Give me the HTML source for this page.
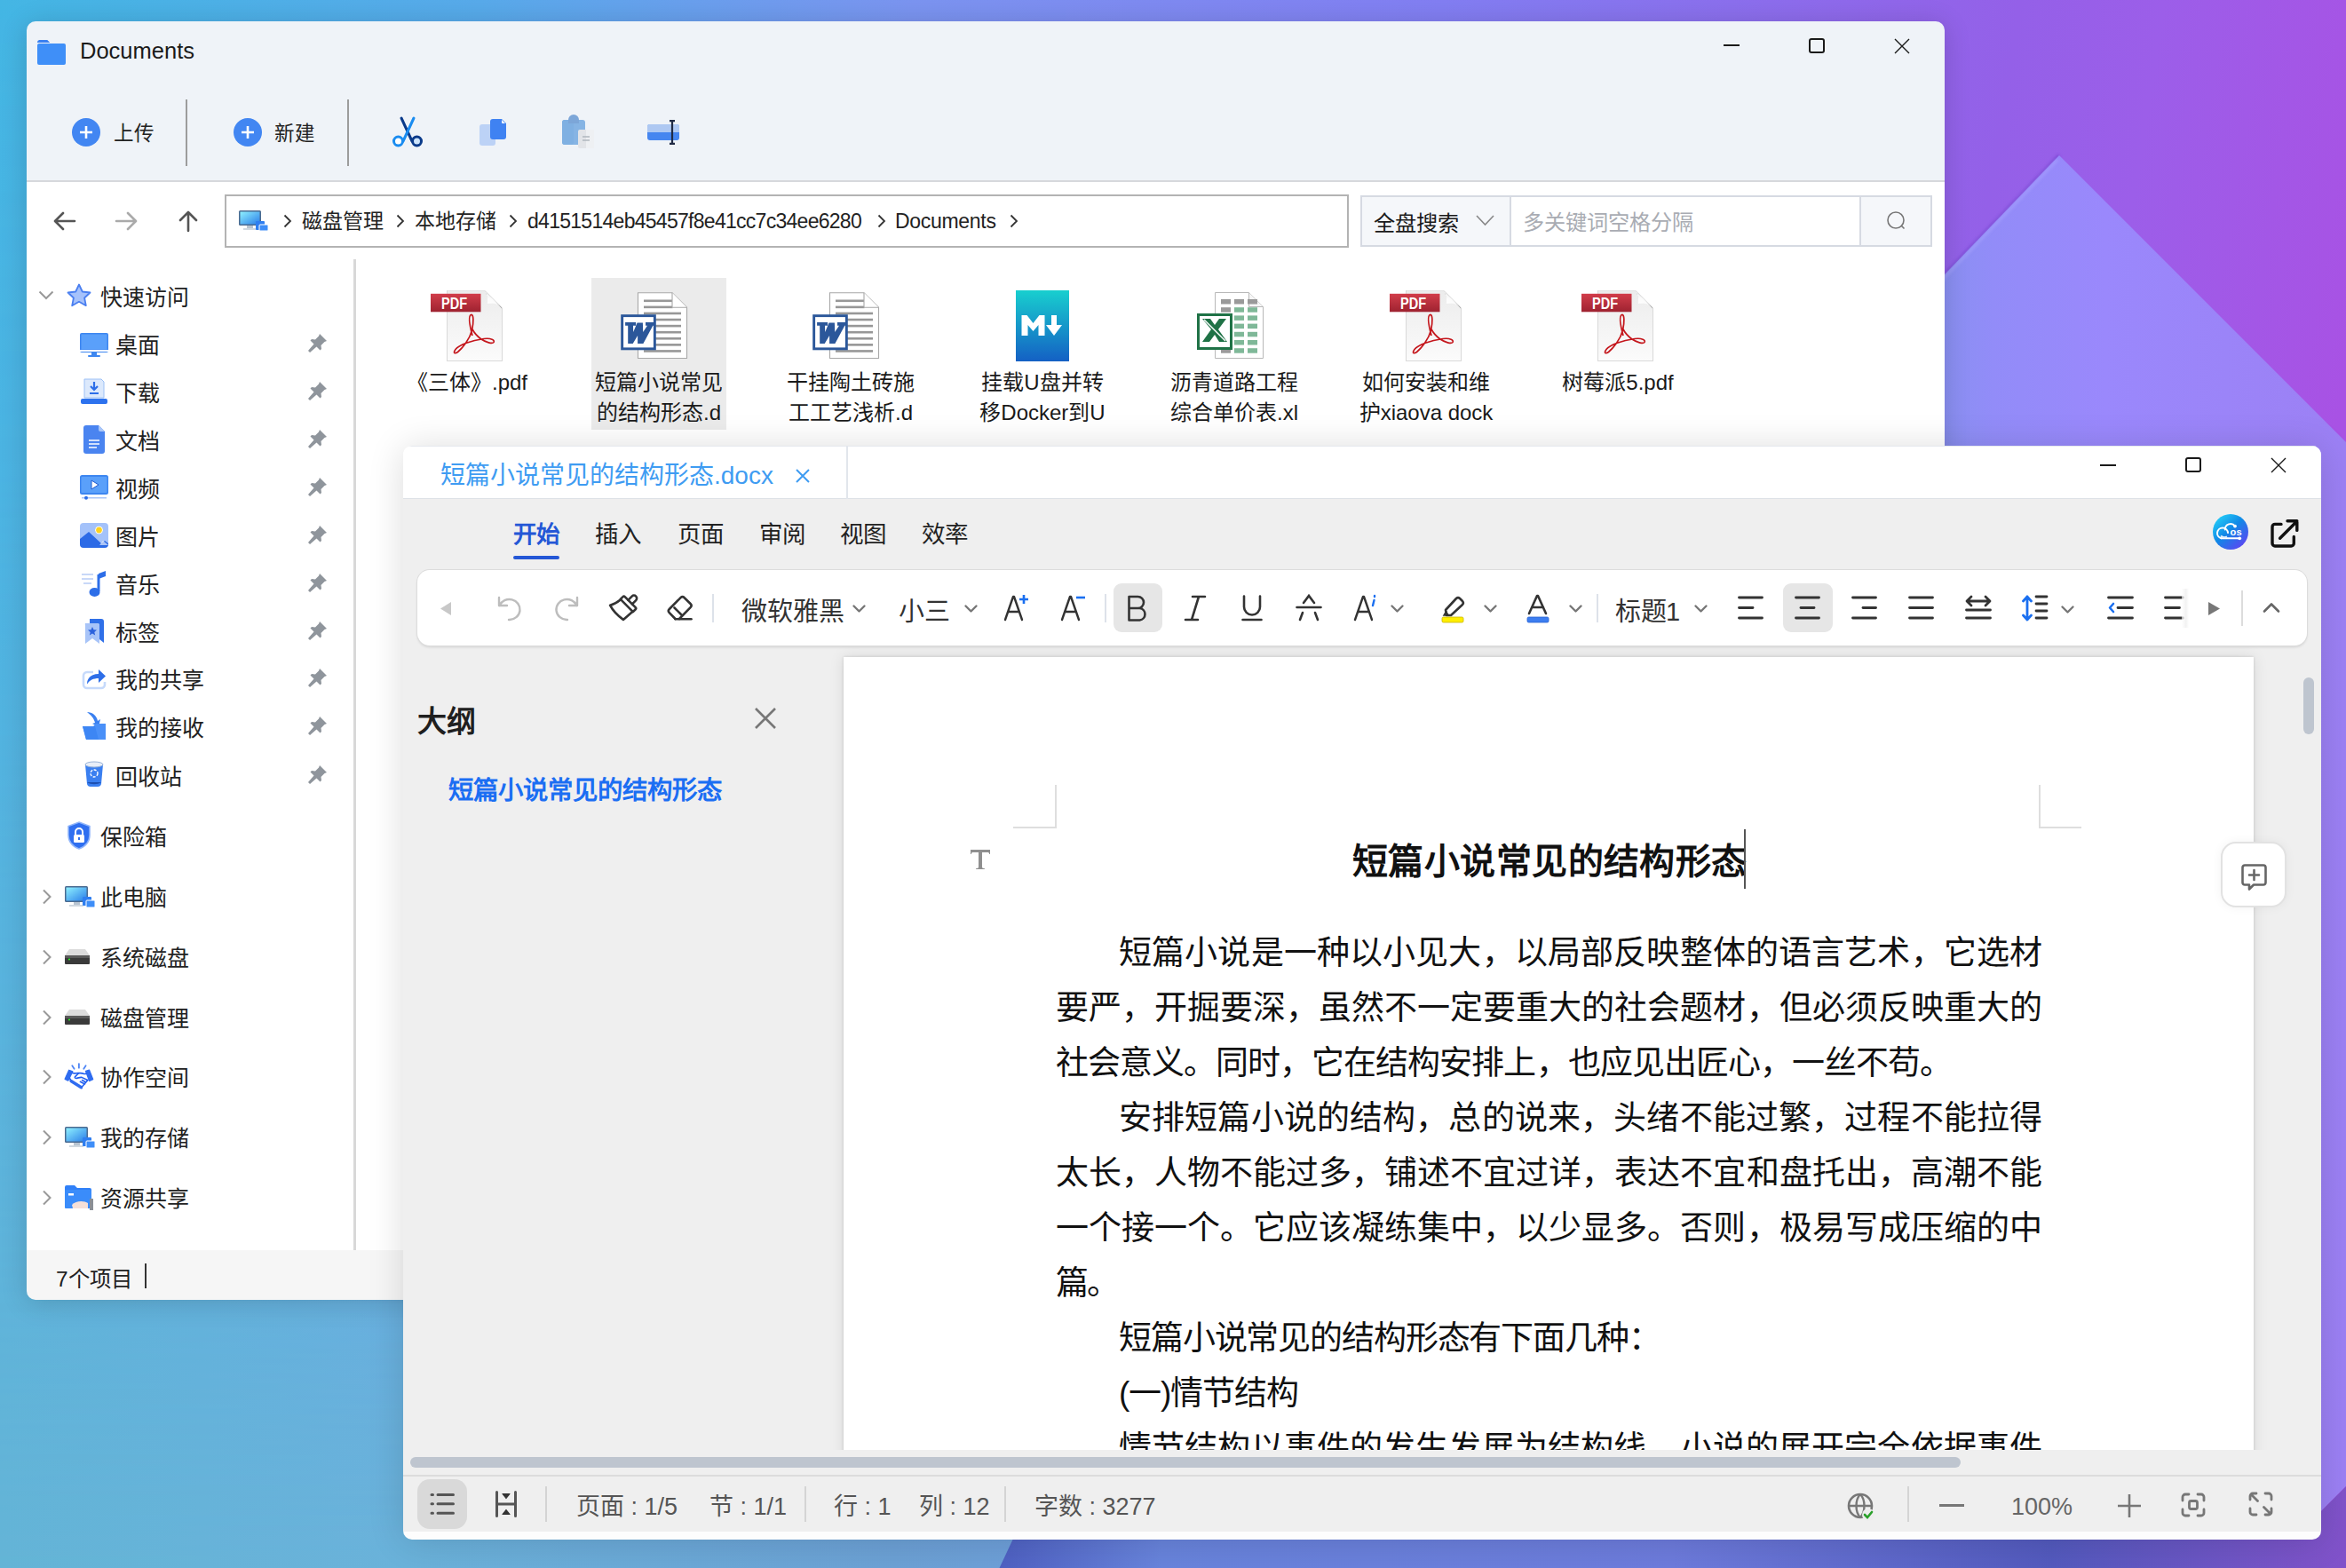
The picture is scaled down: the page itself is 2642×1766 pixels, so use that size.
<!DOCTYPE html>
<html lang="zh-CN"><head><meta charset="utf-8">
<style>
html,body{margin:0;padding:0}
body{width:2642px;height:1766px;position:relative;overflow:hidden;font-family:"Liberation Sans",sans-serif;color:#1a1a1a;background:#6a9ee6}
.a{position:absolute}
.t{position:absolute;white-space:nowrap;line-height:1}
svg{position:absolute;overflow:visible}
#exp{position:absolute;left:0;top:0;width:2642px;height:1766px;clip-path:inset(24px 452px 302px 30px round 10px)}
#edt{position:absolute;left:0;top:0;width:2642px;height:1766px;clip-path:inset(502px 28px 32px 454px round 10px)}
.cj{font-size:25px;color:#222}
.pin{position:absolute;left:347px;width:22px;height:22px}
</style></head><body>
<!-- background -->
<svg class="a" style="left:0;top:0" width="2642" height="1766" viewBox="0 0 2642 1766">
<defs>
<linearGradient id="bgt" gradientUnits="userSpaceOnUse" x1="0" y1="0" x2="2642" y2="420">
<stop offset="0" stop-color="#44b6e4"/>
<stop offset="0.2" stop-color="#58aaea"/>
<stop offset="0.38" stop-color="#7b94f0"/>
<stop offset="0.6" stop-color="#827ef2"/>
<stop offset="0.84" stop-color="#9460e8"/>
<stop offset="0.9" stop-color="#9c5ee9"/>
<stop offset="1" stop-color="#a852e4"/>
</linearGradient>
<linearGradient id="bgb" gradientUnits="userSpaceOnUse" x1="0" y1="0" x2="1200" y2="0">
<stop offset="0" stop-color="#64b4d6"/>
<stop offset="0.38" stop-color="#6ab2da"/>
<stop offset="0.84" stop-color="#6ca1d5"/>
<stop offset="1" stop-color="#6e9fda"/>
</linearGradient>
<linearGradient id="vm" x1="0" y1="0" x2="0" y2="1">
<stop offset="0" stop-color="#fff" stop-opacity="0"/>
<stop offset="0.3" stop-color="#fff" stop-opacity="0.15"/>
<stop offset="1" stop-color="#fff" stop-opacity="1"/>
</linearGradient>
<mask id="m1"><rect width="2642" height="1766" fill="url(#vm)"/></mask>
<linearGradient id="tri" gradientUnits="userSpaceOnUse" x1="2190" y1="0" x2="2642" y2="0">
<stop offset="0" stop-color="#8a90f2"/>
<stop offset="0.12" stop-color="#928cf8"/>
<stop offset="0.4" stop-color="#9a88fc"/>
<stop offset="1" stop-color="#9c80f4"/>
</linearGradient>
<filter id="blur2"><feGaussianBlur stdDeviation="1.5"/></filter>
<linearGradient id="bot" gradientUnits="userSpaceOnUse" x1="1125" y1="0" x2="2642" y2="0">
<stop offset="0" stop-color="#4e60c2"/>
<stop offset="0.12" stop-color="#6884dc"/>
<stop offset="0.5" stop-color="#6d7bdc"/>
<stop offset="0.78" stop-color="#535abe"/>
<stop offset="1" stop-color="#8152ca"/>
</linearGradient>
</defs>
<rect width="2642" height="1766" fill="url(#bgt)"/>
<rect width="1200" height="1766" fill="url(#bgb)" mask="url(#m1)"/>
<path d="M2319 175L1700 819" stroke="#6a3ac8" stroke-opacity="0.5" stroke-width="4" filter="url(#blur2)"/><polygon points="2319,175 2642,498 2642,1674 2600,1716 1700,1716 1700,819" fill="url(#tri)"/><path d="M2317 180L1700 822" stroke="#b0a8ff" stroke-opacity="0.45" stroke-width="3" filter="url(#blur2)"/>
<polygon points="1125.5,1766 1141,1733 1300,1400 2600,1400 2600,1716 2642,1674 2642,1766" fill="url(#bot)"/>

</svg>

<!-- shadows -->
<div class="a" style="left:30px;top:24px;width:2160px;height:1440px;border-radius:10px;box-shadow:0 3px 30px rgba(0,0,0,0.16)"></div>

<!-- ============ EXPLORER ============ -->
<div id="exp">
<div class="a" style="left:30px;top:24px;width:2160px;height:180px;background:#eff3f8"></div>
<div class="a" style="left:30px;top:203px;width:2160px;height:2px;background:#d6d8dc"></div>
<div class="a" style="left:30px;top:205px;width:2160px;height:1203px;background:#fff"></div>
<div class="a" style="left:30px;top:1408px;width:2160px;height:56px;background:#f6f6f6"></div>

<!-- title -->
<svg style="left:42px;top:45px" width="33" height="28" viewBox="0 0 33 28"><path d="M2 0h9l3 3h-12z" fill="#3a7ff2"/><rect x="0" y="4" width="32" height="24" rx="2" fill="#3f8ff8"/><path d="M0 3a3 3 0 0 1 3-3h8l3 3z" fill="#3a80f0"/></svg>
<div class="t" style="left:90px;top:45px;font-size:25.5px;color:#1b1b1b">Documents</div>
<div class="a" style="left:1941px;top:50px;width:18px;height:2.4px;background:#1a1a1a"></div>
<div class="a" style="left:2037px;top:43px;width:14px;height:13.2px;border:2.2px solid #1a1a1a;border-radius:3px"></div>
<svg style="left:2134px;top:44px" width="16" height="16" viewBox="0 0 16 16"><path d="M0 0L16 16M16 0L0 16" stroke="#1a1a1a" stroke-width="1.4"/></svg>
<!-- toolbar -->
<svg style="left:81px;top:133px" width="32" height="32" viewBox="0 0 32 32"><circle cx="16" cy="16" r="16" fill="#4286f2"/><path d="M16 9v14M9 16h14" stroke="#fff" stroke-width="2.6"/></svg>
<div class="t" style="left:128px;top:140px;font-size:22.5px;color:#222">上传</div>
<div class="a" style="left:209px;top:112px;width:2px;height:75px;background:#9c9c9c"></div>
<svg style="left:263px;top:133px" width="32" height="32" viewBox="0 0 32 32"><circle cx="16" cy="16" r="16" fill="#4286f2"/><path d="M16 9v14M9 16h14" stroke="#fff" stroke-width="2.6"/></svg>
<div class="t" style="left:309px;top:140px;font-size:22.5px;color:#222">新建</div>
<div class="a" style="left:391px;top:112px;width:2px;height:75px;background:#9c9c9c"></div>
<!-- scissors -->
<svg style="left:442px;top:132px" width="34" height="34" viewBox="0 0 34 34"><path d="M10 1L22 27" stroke="#0a3a8a" stroke-width="3" stroke-linecap="round"/><path d="M24 1L12 27" stroke="#1a8cf0" stroke-width="3" stroke-linecap="round"/><circle cx="6.5" cy="27" r="5" fill="#fff" stroke="#1a8cf0" stroke-width="3"/><circle cx="27.5" cy="27" r="5" fill="#cde4fb" stroke="#0a3a8a" stroke-width="3"/></svg>
<!-- copy -->
<svg style="left:540px;top:134px" width="30" height="30" viewBox="0 0 30 30"><rect x="0" y="6" width="18" height="24" rx="3" fill="#bcd2f6"/><path d="M15 0h10l5 5v15a3 3 0 0 1-3 3h-12a3 3 0 0 1-3-3v-17a3 3 0 0 1 3-3z" fill="#3f82f2"/><path d="M25 1l4 4h-3a1 1 0 0 1-1-1z" fill="#fff"/></svg>
<!-- paste -->
<svg style="left:633px;top:131px" width="36" height="36" viewBox="0 0 36 36"><rect x="0" y="4" width="26" height="28" rx="3" fill="#86b4e4"/><rect x="0" y="4" width="13" height="28" rx="3" fill="#7fb0e2"/><path d="M7 4a6 6 0 0 1 12 0v4h-12z" fill="#7ca6d8"/><rect x="18" y="15" width="18" height="21" rx="2" fill="#e2e4e8"/><rect x="27" y="15" width="9" height="21" fill="#eef0f3"/><path d="M23 23h8M23 27h8" stroke="#b0b6be" stroke-width="1.6"/></svg>
<!-- rename -->
<svg style="left:729px;top:135px" width="36" height="28" viewBox="0 0 36 28"><rect x="0" y="5" width="36" height="18" rx="3" fill="#4686f0"/><path d="M0 8a3 3 0 0 1 3-3h30a3 3 0 0 1 3 3v1.5h-36z" fill="#aecaf2"/><rect x="0" y="5" width="36" height="9" rx="3" fill="#aec8f2"/><rect x="0" y="11" width="36" height="3" fill="#aec8f2"/><path d="M28 1v26M25 1.2h6M25 26.8h6" stroke="#1f2a44" stroke-width="2.2"/></svg>
<div class="a" style="left:253px;top:219px;width:1262px;height:56px;border:2px solid #b3b3b3;background:#fff"></div>
<svg style="left:319px;top:241px" width="10" height="16" viewBox="0 0 10 16"><path d="M1.5 1.5l6.5 6.5-6.5 6.5" fill="none" stroke="#333" stroke-width="1.8"/></svg>
<div class="t" style="left:340px;top:238px;font-size:23px;color:#222">磁盘管理</div>
<svg style="left:446px;top:241px" width="10" height="16" viewBox="0 0 10 16"><path d="M1.5 1.5l6.5 6.5-6.5 6.5" fill="none" stroke="#333" stroke-width="1.8"/></svg>
<div class="t" style="left:467px;top:238px;font-size:23px;color:#222">本地存储</div>
<svg style="left:573px;top:241px" width="10" height="16" viewBox="0 0 10 16"><path d="M1.5 1.5l6.5 6.5-6.5 6.5" fill="none" stroke="#333" stroke-width="1.8"/></svg>
<div class="t" style="left:594px;top:238px;font-size:23px;letter-spacing:-0.72px;color:#222">d4151514eb45457f8e41cc7c34ee6280</div>
<svg style="left:988px;top:241px" width="10" height="16" viewBox="0 0 10 16"><path d="M1.5 1.5l6.5 6.5-6.5 6.5" fill="none" stroke="#333" stroke-width="1.8"/></svg>
<div class="t" style="left:1008px;top:238px;font-size:23px;letter-spacing:-0.3px;color:#222">Documents</div>
<svg style="left:1137px;top:241px" width="10" height="16" viewBox="0 0 10 16"><path d="M1.5 1.5l6.5 6.5-6.5 6.5" fill="none" stroke="#333" stroke-width="1.8"/></svg>
<div class="a" style="left:1532px;top:220px;width:640px;height:54px;border:2px solid #d6dae2;background:#fff"></div>
<div class="a" style="left:1534px;top:222px;width:166px;height:54px;background:#f5f7fa"></div>
<div class="a" style="left:1700px;top:222px;width:2px;height:54px;background:#d6dae2"></div>
<div class="a" style="left:2094px;top:222px;width:2px;height:54px;background:#d6dae2"></div>
<div class="a" style="left:2096px;top:222px;width:78px;height:54px;background:#f5f7fa"></div>
<div class="t" style="left:1547px;top:239.5px;font-size:24.2px;color:#1a1a1a">全盘搜索</div>
<svg style="left:1662px;top:242px" width="21" height="12" viewBox="0 0 21 12"><path d="M1 1l9.5 10L20 1" fill="none" stroke="#888" stroke-width="1.6"/></svg>
<div class="t" style="left:1715px;top:239px;font-size:24.2px;color:#a9acb3">多关键词空格分隔</div>
<svg style="left:2124px;top:237px" width="24" height="24" viewBox="0 0 24 24"><circle cx="11" cy="11" r="9" fill="none" stroke="#777" stroke-width="1.6"/><path d="M17 17l3.5 3.5" stroke="#777" stroke-width="1.6"/></svg>
<div class="a" style="left:398px;top:292px;width:3px;height:1116px;background:#d8d8d8"></div>
<!-- sidebar -->
<svg style="left:43px;top:327px" width="18" height="11" viewBox="0 0 18 11"><path d="M1.5 1.5L9 9l7.5-7.5" fill="none" stroke="#999" stroke-width="2"/></svg>
<svg style="left:75px;top:319px" width="28" height="27" viewBox="0 0 28 27"><path d="M14 1.5l3.8 8 8.7 1-6.4 6 1.7 8.7L14 20.8l-7.8 4.4 1.7-8.7-6.4-6 8.7-1z" fill="#a6c2fb" stroke="#4a7ff0" stroke-width="1.8" stroke-linejoin="round"/></svg>
<div class="t" style="left:113px;top:323.0px;font-size:25px;color:#222;">快速访问</div>
<svg style="left:90px;top:375px" width="32" height="27" viewBox="0 0 32 27"><rect x="0" y="0" width="32" height="22" rx="2" fill="#3d86f0"/><rect x="1.5" y="1.5" width="29" height="17" fill="#5aa0fa"/><rect x="0" y="19" width="32" height="2" fill="#fff"/><rect x="13" y="22" width="6" height="3" fill="#3d86f0"/><rect x="9" y="25" width="14" height="2" rx="1" fill="#3d86f0"/></svg>
<div class="t" style="left:130px;top:376.7px;font-size:25px;color:#222;">桌面</div>
<svg style="left:347px;top:374.7px" width="22" height="22" viewBox="0 0 22 22"><path d="M13 1l8 8-2.5 1-4 4 .5 4-1.5 1.5-4-4L2 22 0 20l6.5-7.5-4-4L4 7l4 .5 4-4z" fill="#8f959c"/></svg>
<svg style="left:91px;top:425px" width="30" height="31" viewBox="0 0 30 31"><path d="M4 2h19l3 3v18H4z" fill="#dce9fc" stroke="#9cc0f6" stroke-width="1"/><path d="M15 5v9M11 10l4 4 4-4" fill="none" stroke="#2d6ee8" stroke-width="2.2"/><rect x="10" y="17" width="10" height="2" fill="#2d6ee8"/><rect x="0" y="24" width="30" height="6" rx="2" fill="#2d72ee"/></svg>
<div class="t" style="left:130px;top:430.8px;font-size:25px;color:#222;">下载</div>
<svg style="left:347px;top:428.8px" width="22" height="22" viewBox="0 0 22 22"><path d="M13 1l8 8-2.5 1-4 4 .5 4-1.5 1.5-4-4L2 22 0 20l6.5-7.5-4-4L4 7l4 .5 4-4z" fill="#8f959c"/></svg>
<svg style="left:94px;top:479px" width="24" height="32" viewBox="0 0 24 32"><path d="M3 0h14l7 7v22a3 3 0 0 1-3 3H3a3 3 0 0 1-3-3V3a3 3 0 0 1 3-3z" fill="#4a84f0"/><path d="M17 0l7 7h-5a2 2 0 0 1-2-2z" fill="#a9c6f8"/><path d="M6 17h12M6 21h12M6 25h9" stroke="#fff" stroke-width="1.6"/></svg>
<div class="t" style="left:130px;top:485.3px;font-size:25px;color:#222;">文档</div>
<svg style="left:347px;top:483.3px" width="22" height="22" viewBox="0 0 22 22"><path d="M13 1l8 8-2.5 1-4 4 .5 4-1.5 1.5-4-4L2 22 0 20l6.5-7.5-4-4L4 7l4 .5 4-4z" fill="#8f959c"/></svg>
<svg style="left:90px;top:535px" width="32" height="27" viewBox="0 0 32 27"><rect x="0" y="0" width="32" height="22" rx="2.5" fill="#3d86f0"/><rect x="1.5" y="2" width="29" height="18" rx="1" fill="#5aa0fa"/><path d="M13 6l8 5-8 5z" fill="#fff" stroke="#1d5ad0" stroke-width="1"/><rect x="2" y="25" width="28" height="1.5" fill="#a9c6f8"/><circle cx="7" cy="25.8" r="2" fill="#2d6ee8"/></svg>
<div class="t" style="left:130px;top:538.6px;font-size:25px;color:#222;">视频</div>
<svg style="left:347px;top:536.6px" width="22" height="22" viewBox="0 0 22 22"><path d="M13 1l8 8-2.5 1-4 4 .5 4-1.5 1.5-4-4L2 22 0 20l6.5-7.5-4-4L4 7l4 .5 4-4z" fill="#8f959c"/></svg>
<svg style="left:90px;top:589px" width="32" height="27" viewBox="0 0 32 27"><rect x="0" y="0" width="32" height="27" rx="4" fill="#a4c2fa"/><circle cx="21.5" cy="8" r="4" fill="#ffd21f" stroke="#fff" stroke-width="1"/><path d="M0 18l10-8 14 13 4-3 4 3v1a4 4 0 0 1-4 4H4a4 4 0 0 1-4-4z" fill="#2c6ae6"/><path d="M22 25l4-5 6 5z" fill="#fff" opacity=".6"/></svg>
<div class="t" style="left:130px;top:593.0px;font-size:25px;color:#222;">图片</div>
<svg style="left:347px;top:591.0px" width="22" height="22" viewBox="0 0 22 22"><path d="M13 1l8 8-2.5 1-4 4 .5 4-1.5 1.5-4-4L2 22 0 20l6.5-7.5-4-4L4 7l4 .5 4-4z" fill="#8f959c"/></svg>
<svg style="left:92px;top:643px" width="28" height="30" viewBox="0 0 28 30"><path d="M0 4h13M0 9h13M2 14h9" stroke="#c8d8f8" stroke-width="2.2"/><path d="M19 4v19" stroke="#2d6ee8" stroke-width="3"/><path d="M19 3l8-3v6l-8 3z" fill="#2d6ee8"/><ellipse cx="14.5" cy="24" rx="6" ry="5" fill="#2d6ee8"/></svg>
<div class="t" style="left:130px;top:647.0px;font-size:25px;color:#222;">音乐</div>
<svg style="left:347px;top:645.0px" width="22" height="22" viewBox="0 0 22 22"><path d="M13 1l8 8-2.5 1-4 4 .5 4-1.5 1.5-4-4L2 22 0 20l6.5-7.5-4-4L4 7l4 .5 4-4z" fill="#8f959c"/></svg>
<svg style="left:93px;top:695px" width="25" height="31" viewBox="0 0 25 31"><path d="M8 2h13a3 3 0 0 1 3 3v24l-5-4V10a3 3 0 0 0-3-3H8z" fill="#3070e8"/><path d="M3 7h14a2 2 0 0 1 2 2v21l-8-6-8 6V9a2 2 0 0 1 0-2z" fill="#a8c4f8"/><path d="M11 11l1.5 3.3 3.5.3-2.7 2.3.9 3.5-3.2-1.9-3.2 1.9.9-3.5-2.7-2.3 3.5-.3z" fill="#2c62dc"/></svg>
<div class="t" style="left:130px;top:700.5px;font-size:25px;color:#222;">标签</div>
<svg style="left:347px;top:698.5px" width="22" height="22" viewBox="0 0 22 22"><path d="M13 1l8 8-2.5 1-4 4 .5 4-1.5 1.5-4-4L2 22 0 20l6.5-7.5-4-4L4 7l4 .5 4-4z" fill="#8f959c"/></svg>
<svg style="left:93px;top:751px" width="26" height="25" viewBox="0 0 26 25"><path d="M12 6H5a4 4 0 0 0-4 4v10a4 4 0 0 0 4 4h16a4 4 0 0 0 4-4v-3" fill="none" stroke="#c6dafb" stroke-width="2.6"/><path d="M5 19c0-7 6-11 13-11V3l8 7.5-8 7.5v-5c-6 0-10 2-13 6.5z" fill="#2d6ee8"/></svg>
<div class="t" style="left:130px;top:753.8px;font-size:25px;color:#222;">我的共享</div>
<svg style="left:347px;top:751.8px" width="22" height="22" viewBox="0 0 22 22"><path d="M13 1l8 8-2.5 1-4 4 .5 4-1.5 1.5-4-4L2 22 0 20l6.5-7.5-4-4L4 7l4 .5 4-4z" fill="#8f959c"/></svg>
<svg style="left:93px;top:801px" width="27" height="33" viewBox="0 0 27 33"><path d="M5 1c6 0 11 4 12 10l3-2-2 9-7-4 3-1c-1-5-5-9-9-12z" fill="#3a80f0"/><path d="M0 17h12l3-3h11v18H4z" fill="#4a90f8"/><path d="M0 17h14l4 15H4z" fill="#3d86f4"/></svg>
<div class="t" style="left:130px;top:808.4px;font-size:25px;color:#222;">我的接收</div>
<svg style="left:347px;top:806.4px" width="22" height="22" viewBox="0 0 22 22"><path d="M13 1l8 8-2.5 1-4 4 .5 4-1.5 1.5-4-4L2 22 0 20l6.5-7.5-4-4L4 7l4 .5 4-4z" fill="#8f959c"/></svg>
<svg style="left:95px;top:857px" width="22" height="30" viewBox="0 0 22 30"><path d="M1 4h20l-2 22a4 4 0 0 1-4 3H7a4 4 0 0 1-4-3z" fill="#3a7ff0"/><ellipse cx="11" cy="4" rx="10" ry="3" fill="#e8eef8" stroke="#9ab4d8" stroke-width="1"/><path d="M3 24c4 3 12 3 16 0" fill="#1d4fb0"/><circle cx="11" cy="14" r="4" fill="none" stroke="#fff" stroke-width="1.4" stroke-dasharray="3 1.5"/></svg>
<div class="t" style="left:130px;top:862.9px;font-size:25px;color:#222;">回收站</div>
<svg style="left:347px;top:860.9px" width="22" height="22" viewBox="0 0 22 22"><path d="M13 1l8 8-2.5 1-4 4 .5 4-1.5 1.5-4-4L2 22 0 20l6.5-7.5-4-4L4 7l4 .5 4-4z" fill="#8f959c"/></svg>
<svg style="left:75px;top:925px" width="28" height="32" viewBox="0 0 28 32"><path d="M14 1l12 4.5v10c0 8-5.5 13-12 15.5C7.5 28.5 2 23.5 2 15.5v-10z" fill="#2f6ff0" stroke="#8fb4fa" stroke-width="1.5"/><path d="M10 15v-3a4 4 0 0 1 8 0v3" fill="none" stroke="#fff" stroke-width="2"/><rect x="8" y="15" width="12" height="9" rx="1.5" fill="#fff"/><rect x="13" y="18" width="2" height="3" fill="#2f6ff0"/></svg>
<div class="t" style="left:113px;top:930.8px;font-size:25px;color:#222;">保险箱</div>
<svg style="left:47px;top:1001px" width="12" height="18" viewBox="0 0 12 18"><path d="M2 1.5l7.5 7.5L2 16.5" fill="none" stroke="#999" stroke-width="2"/></svg>
<svg style="left:73px;top:998px" width="34" height="24" viewBox="0 0 34 24"><defs><linearGradient id="scr2" x1="0" y1="0" x2="1" y2="1"><stop offset="0" stop-color="#8ef0ff"/><stop offset="1" stop-color="#2a7ee8"/></linearGradient></defs><rect x="0" y="0" width="26" height="18" rx="1.5" fill="#4a6a90"/><rect x="1.5" y="1.5" width="23" height="15" fill="url(#scr2)"/><rect x="10" y="18" width="7" height="3" fill="#b8c4d0"/><rect x="5" y="21" width="16" height="2" fill="#d0d8e0"/><rect x="20" y="12" width="10" height="10" rx="1" fill="#2e7ef0"/><rect x="24" y="16" width="10" height="8" rx="1" fill="#3e8ef8" stroke="#fff" stroke-width="1"/></svg>
<div class="t" style="left:113px;top:998.6px;font-size:25px;color:#222;">此电脑</div>
<svg style="left:47px;top:1069px" width="12" height="18" viewBox="0 0 12 18"><path d="M2 1.5l7.5 7.5L2 16.5" fill="none" stroke="#999" stroke-width="2"/></svg>
<svg style="left:73px;top:1069px" width="28" height="17" viewBox="0 0 28 17"><path d="M5 0h18l5 7H0z" fill="#dcdcdc"/><rect x="0" y="7" width="28" height="10" rx="1" fill="#3a3a3a"/><rect x="0" y="7" width="28" height="3" fill="#5a5a5a"/><circle cx="5" cy="11.5" r="1" fill="#2f2"/></svg>
<div class="t" style="left:113px;top:1066.6px;font-size:25px;color:#222;">系统磁盘</div>
<svg style="left:47px;top:1137px" width="12" height="18" viewBox="0 0 12 18"><path d="M2 1.5l7.5 7.5L2 16.5" fill="none" stroke="#999" stroke-width="2"/></svg>
<svg style="left:73px;top:1137px" width="28" height="17" viewBox="0 0 28 17"><path d="M5 0h18l5 7H0z" fill="#dcdcdc"/><rect x="0" y="7" width="28" height="10" rx="1" fill="#3a3a3a"/><rect x="0" y="7" width="28" height="3" fill="#5a5a5a"/><circle cx="5" cy="11.5" r="1" fill="#2f2"/></svg>
<div class="t" style="left:113px;top:1134.6px;font-size:25px;color:#222;">磁盘管理</div>
<svg style="left:47px;top:1204px" width="12" height="18" viewBox="0 0 12 18"><path d="M2 1.5l7.5 7.5L2 16.5" fill="none" stroke="#999" stroke-width="2"/></svg>
<svg style="left:68px;top:1192px" width="44" height="40" viewBox="0 0 44 40"><path d="M13.3 8.2L15.6 11.7M20.9 6.1V10.7M28.6 8.2L26.3 11.7" stroke="#4f86f6" stroke-width="1.8" stroke-linecap="round"/><path d="M9.7 13.3L13.8 14.8L8.8 25L5.2 23.3Z" fill="#2f6cf0" stroke="#2f6cf0" stroke-width="1.4" stroke-linejoin="round"/><path d="M28.6 14.5L32.5 13.2L36.6 23.5L32.7 25.4Z" fill="#2f6cf0" stroke="#2f6cf0" stroke-width="1.4" stroke-linejoin="round"/><g fill="none" stroke="#1f5ef0" stroke-width="1.6" stroke-linecap="round" stroke-linejoin="round"><path d="M13.8 16.5C16 17.5 18 16.5 20 16.6C22 16.8 24 16.2 26 17.2C27 17.8 28 17.6 29 17.3"/><path d="M20.5 16.8L16.4 20.9C16 22 17 22.6 18.5 22.4C20.5 22 22 21 24 21.4L30.6 24.5"/><path d="M24.5 24.5L28.8 27M22.4 26.3L27.6 29M30.9 24.5L23.5 33M10.6 22.8L12 25"/></g><path d="M12 25.5L23.5 32.8" stroke="#2f6cf0" stroke-width="3.4" stroke-linecap="round"/></svg>
<div class="t" style="left:113px;top:1202.3px;font-size:25px;color:#222;">协作空间</div>
<svg style="left:47px;top:1272px" width="12" height="18" viewBox="0 0 12 18"><path d="M2 1.5l7.5 7.5L2 16.5" fill="none" stroke="#999" stroke-width="2"/></svg>
<svg style="left:73px;top:1269px" width="34" height="24" viewBox="0 0 34 24"><defs><linearGradient id="scr2" x1="0" y1="0" x2="1" y2="1"><stop offset="0" stop-color="#8ef0ff"/><stop offset="1" stop-color="#2a7ee8"/></linearGradient></defs><rect x="0" y="0" width="26" height="18" rx="1.5" fill="#4a6a90"/><rect x="1.5" y="1.5" width="23" height="15" fill="url(#scr2)"/><rect x="10" y="18" width="7" height="3" fill="#b8c4d0"/><rect x="5" y="21" width="16" height="2" fill="#d0d8e0"/><rect x="20" y="12" width="10" height="10" rx="1" fill="#2e7ef0"/><rect x="24" y="16" width="10" height="8" rx="1" fill="#3e8ef8" stroke="#fff" stroke-width="1"/></svg>
<div class="t" style="left:113px;top:1270.4px;font-size:25px;color:#222;">我的存储</div>
<svg style="left:47px;top:1340px" width="12" height="18" viewBox="0 0 12 18"><path d="M2 1.5l7.5 7.5L2 16.5" fill="none" stroke="#999" stroke-width="2"/></svg>
<svg style="left:73px;top:1335px" width="32" height="28" viewBox="0 0 32 28"><path d="M0 2a2 2 0 0 1 2-2h9l3 3h14a2 2 0 0 1 2 2v20H0z" fill="#3080f8"/><rect x="0" y="5" width="30" height="21" rx="1" fill="#3a8cfa"/><rect x="4" y="9" width="6" height="2.5" fill="#fff"/><path d="M8 22c4-5 14-5 18-2v6H9z" fill="#f6e0d8"/><rect x="28" y="15" width="4" height="13" fill="#8a8f96"/></svg>
<div class="t" style="left:113px;top:1338.4px;font-size:25px;color:#222;">资源共享</div>
<div class="t" style="left:63px;top:1428.5px;font-size:24.4px;color:#222;">7个项目</div>
<div class="a" style="left:163px;top:1423px;width:2px;height:28px;background:#333"></div>
<!-- files -->
<div class="a" style="left:666px;top:313px;width:152px;height:171px;background:#ebebeb"></div>
<svg style="left:485px;top:326px" width="82" height="84" viewBox="0 0 82 84"><defs><linearGradient id="pg526" x1="0" y1="0" x2="0" y2="1"><stop offset="0" stop-color="#ececec"/><stop offset="1" stop-color="#fbfbfb"/></linearGradient><linearGradient id="rb526" x1="0" y1="0" x2="0" y2="1"><stop offset="0" stop-color="#d23d4a"/><stop offset="1" stop-color="#9e2230"/></linearGradient><radialGradient id="cu526" cx="0.2" cy="0.9" r="0.9"><stop offset="0" stop-color="#fff"/><stop offset="0.55" stop-color="#d0d0d0"/><stop offset="0.8" stop-color="#7a7a7a"/><stop offset="1" stop-color="#bbb"/></radialGradient></defs>
<path d="M18 1h43l20 20v60H18z" fill="#d9d9d9"/><path d="M19 1.5h41.5l19.5 19.5v59H19z" fill="url(#pg526)"/><path d="M61 1.5c2 3 3 8 3 14 6-1 13 1 16 6v-1z" fill="url(#cu526)"/><path d="M61 1.5l19 19.5c-3-4-9-6-16-5 0-6-1-11-3-14.5z" fill="#fff" opacity=".9"/>
<rect x="0" y="4.8" width="56.5" height="20.5" fill="url(#rb526)"/><text x="12" y="22" font-family="Liberation Sans" font-weight="700" font-size="17.5" fill="#fff" textLength="29" lengthAdjust="spacingAndGlyphs">PDF</text>
<path d="M47 52C44 41 42 30 45.5 28.5C48.5 27.5 48.5 37 46.5 46C44 56 36 66 30.5 70.5C27 73 25 71.5 28 67.5C32 62 46 57.5 60 55.5C68 54.5 72.5 57 71 59.5C69.5 61.5 62 59.5 57 56C52 52.5 48.5 48 46.5 44" fill="none" stroke="#c4161c" stroke-width="1.7"/></svg>
<div class="t" style="left:426px;width:200px;text-align:center;top:419.3px;font-size:24px;color:#1a1a1a">《三体》.pdf</div>
<svg style="left:699px;top:329px" width="76" height="76" viewBox="0 0 76 76"><path d="M19.5 0.8H58L74.5 17.3V74.5H19.5Z" fill="#fff" stroke="#a8a8a8" stroke-width="1.1"/><rect x="26" y="8.50" width="32.5" height="2.6" fill="#979797"/><rect x="26" y="15.58" width="32.5" height="2.6" fill="#979797"/><rect x="26" y="22.66" width="42" height="2.6" fill="#979797"/><rect x="26" y="29.74" width="42" height="2.6" fill="#979797"/><rect x="26" y="36.82" width="42" height="2.6" fill="#979797"/><rect x="26" y="43.90" width="42" height="2.6" fill="#979797"/><rect x="26" y="50.98" width="42" height="2.6" fill="#979797"/><rect x="26" y="58.06" width="42" height="2.6" fill="#979797"/><rect x="26" y="65.14" width="42" height="2.6" fill="#979797"/><path d="M58 0.8V17.3H74.5" fill="#fff" stroke="#a8a8a8" stroke-width="1.1"/><rect x="1.65" y="26.65" width="36.7" height="37.2" fill="#fff" stroke="#2b579a" stroke-width="2.9"/><path d="M5.1 34.1H17.1V37.8H14L14.2 45L18.6 34.6H24.9L25.2 45L30 37.8H28V34.1H37.5V37.8H36.3L25.4 57.9H19.1V49L13.7 57.9H8.2V37.8H5.1Z" fill="#2b579a"/></svg>
<div class="t" style="left:642px;width:200px;text-align:center;top:419.3px;font-size:24px;color:#1a1a1a">短篇小说常见</div>
<div class="t" style="left:642px;width:200px;text-align:center;top:453.1px;font-size:24px;color:#1a1a1a">的结构形态.d</div>
<svg style="left:915px;top:329px" width="76" height="76" viewBox="0 0 76 76"><path d="M19.5 0.8H58L74.5 17.3V74.5H19.5Z" fill="#fff" stroke="#a8a8a8" stroke-width="1.1"/><rect x="26" y="8.50" width="32.5" height="2.6" fill="#979797"/><rect x="26" y="15.58" width="32.5" height="2.6" fill="#979797"/><rect x="26" y="22.66" width="42" height="2.6" fill="#979797"/><rect x="26" y="29.74" width="42" height="2.6" fill="#979797"/><rect x="26" y="36.82" width="42" height="2.6" fill="#979797"/><rect x="26" y="43.90" width="42" height="2.6" fill="#979797"/><rect x="26" y="50.98" width="42" height="2.6" fill="#979797"/><rect x="26" y="58.06" width="42" height="2.6" fill="#979797"/><rect x="26" y="65.14" width="42" height="2.6" fill="#979797"/><path d="M58 0.8V17.3H74.5" fill="#fff" stroke="#a8a8a8" stroke-width="1.1"/><rect x="1.65" y="26.65" width="36.7" height="37.2" fill="#fff" stroke="#2b579a" stroke-width="2.9"/><path d="M5.1 34.1H17.1V37.8H14L14.2 45L18.6 34.6H24.9L25.2 45L30 37.8H28V34.1H37.5V37.8H36.3L25.4 57.9H19.1V49L13.7 57.9H8.2V37.8H5.1Z" fill="#2b579a"/></svg>
<div class="t" style="left:858px;width:200px;text-align:center;top:419.3px;font-size:24px;color:#1a1a1a">干挂陶土砖施</div>
<div class="t" style="left:858px;width:200px;text-align:center;top:453.1px;font-size:24px;color:#1a1a1a">工工艺浅析.d</div>
<svg style="left:1144px;top:327px" width="61" height="81" viewBox="0 0 61 81"><defs><linearGradient id="mdg" x1="0" y1="0" x2="0" y2="1"><stop offset="0" stop-color="#18cfcf"/><stop offset="1" stop-color="#1460c4"/></linearGradient></defs><rect x="0" y="0" width="60" height="80" fill="url(#mdg)"/><path d="M6.5 51V28h6l7 9 7-9h6v23h-7V39l-6 7-6-7v12z" fill="#fff"/><path d="M40 28h6v11h6l-9 12-9-12h6z" fill="#fff"/></svg>
<div class="t" style="left:1074px;width:200px;text-align:center;top:419.3px;font-size:24px;color:#1a1a1a">挂载U盘并转</div>
<div class="t" style="left:1074px;width:200px;text-align:center;top:453.1px;font-size:24px;color:#1a1a1a">移Docker到U</div>
<svg style="left:1348px;top:329px" width="76" height="76" viewBox="0 0 76 76"><path d="M20.5 0.5h38l16 16v58h-54z" fill="#fff" stroke="#b8b8b8" stroke-width="1"/><path d="M58.5 0.5v16h16" fill="#f6f6f6" stroke="#b8b8b8" stroke-width="1"/><rect x="27" y="8.0" width="11" height="5.5" fill="#9a9a9a"/><rect x="42" y="8.0" width="11" height="5.5" fill="#9a9a9a"/><rect x="57" y="8.0" width="11" height="5.5" fill="#9a9a9a"/><rect x="27" y="17.2" width="11" height="5.5" fill="#9a9a9a"/><rect x="42" y="17.2" width="11" height="5.5" fill="#7fb898"/><rect x="57" y="17.2" width="11" height="5.5" fill="#7fb898"/><rect x="27" y="26.4" width="11" height="5.5" fill="#7fb898"/><rect x="42" y="26.4" width="11" height="5.5" fill="#7fb898"/><rect x="57" y="26.4" width="11" height="5.5" fill="#7fb898"/><rect x="27" y="35.6" width="11" height="5.5" fill="#7fb898"/><rect x="42" y="35.6" width="11" height="5.5" fill="#7fb898"/><rect x="57" y="35.6" width="11" height="5.5" fill="#7fb898"/><rect x="27" y="44.8" width="11" height="5.5" fill="#7fb898"/><rect x="42" y="44.8" width="11" height="5.5" fill="#7fb898"/><rect x="57" y="44.8" width="11" height="5.5" fill="#7fb898"/><rect x="27" y="54.0" width="11" height="5.5" fill="#7fb898"/><rect x="42" y="54.0" width="11" height="5.5" fill="#7fb898"/><rect x="57" y="54.0" width="11" height="5.5" fill="#7fb898"/><rect x="27" y="63.2" width="11" height="5.5" fill="#9a9a9a"/><rect x="42" y="63.2" width="11" height="5.5" fill="#7fb898"/><rect x="57" y="63.2" width="11" height="5.5" fill="#7fb898"/>
<rect x="1.5" y="25.5" width="37" height="38" fill="#fff" stroke="#1f7246" stroke-width="3"/><path d="M6 30h9l5 7 5-7h8l-9 12 10 14h-9l-5-8-6 8H6l10-14z" fill="#1f7246"/><path d="M8 31l24 24" stroke="#fff" stroke-width="1.5"/></svg>
<div class="t" style="left:1290px;width:200px;text-align:center;top:419.3px;font-size:24px;color:#1a1a1a">沥青道路工程</div>
<div class="t" style="left:1290px;width:200px;text-align:center;top:453.1px;font-size:24px;color:#1a1a1a">综合单价表.xl</div>
<svg style="left:1565px;top:326px" width="82" height="84" viewBox="0 0 82 84"><defs><linearGradient id="pg1606" x1="0" y1="0" x2="0" y2="1"><stop offset="0" stop-color="#ececec"/><stop offset="1" stop-color="#fbfbfb"/></linearGradient><linearGradient id="rb1606" x1="0" y1="0" x2="0" y2="1"><stop offset="0" stop-color="#d23d4a"/><stop offset="1" stop-color="#9e2230"/></linearGradient><radialGradient id="cu1606" cx="0.2" cy="0.9" r="0.9"><stop offset="0" stop-color="#fff"/><stop offset="0.55" stop-color="#d0d0d0"/><stop offset="0.8" stop-color="#7a7a7a"/><stop offset="1" stop-color="#bbb"/></radialGradient></defs>
<path d="M18 1h43l20 20v60H18z" fill="#d9d9d9"/><path d="M19 1.5h41.5l19.5 19.5v59H19z" fill="url(#pg1606)"/><path d="M61 1.5c2 3 3 8 3 14 6-1 13 1 16 6v-1z" fill="url(#cu1606)"/><path d="M61 1.5l19 19.5c-3-4-9-6-16-5 0-6-1-11-3-14.5z" fill="#fff" opacity=".9"/>
<rect x="0" y="4.8" width="56.5" height="20.5" fill="url(#rb1606)"/><text x="12" y="22" font-family="Liberation Sans" font-weight="700" font-size="17.5" fill="#fff" textLength="29" lengthAdjust="spacingAndGlyphs">PDF</text>
<path d="M47 52C44 41 42 30 45.5 28.5C48.5 27.5 48.5 37 46.5 46C44 56 36 66 30.5 70.5C27 73 25 71.5 28 67.5C32 62 46 57.5 60 55.5C68 54.5 72.5 57 71 59.5C69.5 61.5 62 59.5 57 56C52 52.5 48.5 48 46.5 44" fill="none" stroke="#c4161c" stroke-width="1.7"/></svg>
<div class="t" style="left:1506px;width:200px;text-align:center;top:419.3px;font-size:24px;color:#1a1a1a">如何安装和维</div>
<div class="t" style="left:1506px;width:200px;text-align:center;top:453.1px;font-size:24px;color:#1a1a1a">护xiaova dock</div>
<svg style="left:1781px;top:326px" width="82" height="84" viewBox="0 0 82 84"><defs><linearGradient id="pg1822" x1="0" y1="0" x2="0" y2="1"><stop offset="0" stop-color="#ececec"/><stop offset="1" stop-color="#fbfbfb"/></linearGradient><linearGradient id="rb1822" x1="0" y1="0" x2="0" y2="1"><stop offset="0" stop-color="#d23d4a"/><stop offset="1" stop-color="#9e2230"/></linearGradient><radialGradient id="cu1822" cx="0.2" cy="0.9" r="0.9"><stop offset="0" stop-color="#fff"/><stop offset="0.55" stop-color="#d0d0d0"/><stop offset="0.8" stop-color="#7a7a7a"/><stop offset="1" stop-color="#bbb"/></radialGradient></defs>
<path d="M18 1h43l20 20v60H18z" fill="#d9d9d9"/><path d="M19 1.5h41.5l19.5 19.5v59H19z" fill="url(#pg1822)"/><path d="M61 1.5c2 3 3 8 3 14 6-1 13 1 16 6v-1z" fill="url(#cu1822)"/><path d="M61 1.5l19 19.5c-3-4-9-6-16-5 0-6-1-11-3-14.5z" fill="#fff" opacity=".9"/>
<rect x="0" y="4.8" width="56.5" height="20.5" fill="url(#rb1822)"/><text x="12" y="22" font-family="Liberation Sans" font-weight="700" font-size="17.5" fill="#fff" textLength="29" lengthAdjust="spacingAndGlyphs">PDF</text>
<path d="M47 52C44 41 42 30 45.5 28.5C48.5 27.5 48.5 37 46.5 46C44 56 36 66 30.5 70.5C27 73 25 71.5 28 67.5C32 62 46 57.5 60 55.5C68 54.5 72.5 57 71 59.5C69.5 61.5 62 59.5 57 56C52 52.5 48.5 48 46.5 44" fill="none" stroke="#c4161c" stroke-width="1.7"/></svg>
<div class="t" style="left:1722px;width:200px;text-align:center;top:419.3px;font-size:24px;color:#1a1a1a">树莓派5.pdf</div>
<!-- nav -->
<svg style="left:60px;top:238px" width="25" height="22" viewBox="0 0 25 22"><path d="M24 11H3M11 2L2 11l9 9" fill="none" stroke="#555" stroke-width="2.6" stroke-linecap="round" stroke-linejoin="round"/></svg>
<svg style="left:130px;top:238px" width="25" height="22" viewBox="0 0 25 22"><path d="M1 11h21M14 2l9 9-9 9" fill="none" stroke="#aaa" stroke-width="2.6" stroke-linecap="round" stroke-linejoin="round"/></svg>
<svg style="left:201px;top:237px" width="22" height="24" viewBox="0 0 22 24"><path d="M11 23V2M2 11l9-9 9 9" fill="none" stroke="#555" stroke-width="2.6" stroke-linecap="round" stroke-linejoin="round"/></svg>
<!-- address -->
<svg style="left:269px;top:237px" width="33" height="23" viewBox="0 0 33 23"><defs><linearGradient id="scr" x1="0" y1="0" x2="1" y2="1"><stop offset="0" stop-color="#8ef0ff"/><stop offset="1" stop-color="#2a7ee8"/></linearGradient></defs><rect x="0" y="0" width="25" height="17" rx="1.5" fill="#4a6a90"/><rect x="1.5" y="1.5" width="22" height="14" fill="url(#scr)"/><rect x="9" y="17" width="7" height="3" fill="#b8c4d0"/><rect x="5" y="20" width="15" height="2" fill="#d0d8e0"/><rect x="19" y="12" width="10" height="10" rx="1" fill="#2e7ef0"/><rect x="23" y="16" width="10" height="7" rx="1" fill="#3e8ef8" stroke="#fff" stroke-width="1"/></svg>
</div>

<div class="a" style="left:454px;top:502px;width:2160px;height:1232px;border-radius:10px;box-shadow:0 2px 40px rgba(0,0,0,0.14)"></div>
<!-- ============ EDITOR ============ -->
<div id="edt">
<div class="a" style="left:454px;top:502px;width:2160px;height:60px;background:#fff"></div>
<div class="a" style="left:454px;top:561px;width:2160px;height:1px;background:#dde1e6"></div>
<div class="a" style="left:454px;top:562px;width:2160px;height:1100px;background:#efefef"></div>
<div class="a" style="left:454px;top:1661px;width:2160px;height:2px;background:#dcdcdc"></div>
<div class="a" style="left:454px;top:1663px;width:2160px;height:62px;background:#efefef"></div>
<div class="a" style="left:454px;top:1725px;width:2160px;height:9px;background:#fdfdfd"></div>
<div class="a" style="left:454px;top:502px;width:2160px;height:1px;background:#e6e9ee"></div>
<div class="a" style="left:953px;top:502px;width:2px;height:60px;background:#e2e6ec"></div>
<div class="t" style="left:496px;top:522px;font-size:28px;color:#3f9cf2;font-weight:500;">短篇小说常见的结构形态.docx</div>
<svg style="left:896px;top:528px" width="16" height="16" viewBox="0 0 16 16"><path d="M1 1l14 14M15 1L1 15" stroke="#3f9cf2" stroke-width="2"/></svg>
<div class="a" style="left:2365px;top:522.5px;width:18px;height:2.4px;background:#1a1a1a"></div>
<div class="a" style="left:2461px;top:515px;width:14px;height:13.3px;border:2.2px solid #1a1a1a;border-radius:3px"></div>
<svg style="left:2558px;top:516px" width="16" height="16" viewBox="0 0 16 16"><path d="M0 0L16 16M16 0L0 16" stroke="#1a1a1a" stroke-width="1.4"/></svg>
<div class="t" style="left:577.5px;top:589px;font-size:26.5px;color:#2457d6;font-weight:700;">开始</div>
<div class="a" style="left:578px;top:626px;width:52px;height:4px;border-radius:2px;background:#2457d6"></div>
<div class="t" style="left:669.5px;top:589px;font-size:26.5px;color:#222;font-weight:400;">插入</div>
<div class="t" style="left:762.5px;top:589px;font-size:26.5px;color:#222;font-weight:400;">页面</div>
<div class="t" style="left:854.5px;top:589px;font-size:26.5px;color:#222;font-weight:400;">审阅</div>
<div class="t" style="left:945.5px;top:589px;font-size:26.5px;color:#222;font-weight:400;">视图</div>
<div class="t" style="left:1037.5px;top:589px;font-size:26.5px;color:#222;font-weight:400;">效率</div>
<svg style="left:2492px;top:579px" width="40" height="40" viewBox="0 0 40 40"><defs><linearGradient id="cos" x1="0.15" y1="0.1" x2="0.85" y2="0.9"><stop offset="0" stop-color="#22c8f6"/><stop offset="0.45" stop-color="#1088e6"/><stop offset="1" stop-color="#5a48f2"/></linearGradient></defs><circle cx="20" cy="20" r="20" fill="url(#cos)"/><g fill="none" stroke="#fff" stroke-width="2" stroke-linecap="round"><path d="M9.5 27.3A6 6 0 1 1 17 21"/><path d="M13.8 17.5A6.2 6.2 0 0 1 25 13.6"/><path d="M9.5 27.3H30"/></g><circle cx="25" cy="13.6" r="1.9" fill="#fff"/><circle cx="30.2" cy="27.3" r="1.9" fill="#fff"/><path d="M9 24.5c2 2 5 2 7 1" stroke="#dff0ff" stroke-width="2" fill="none"/><text x="19.6" y="23.8" font-family="Liberation Sans" font-weight="700" font-size="10.5" fill="#fff" textLength="13" lengthAdjust="spacingAndGlyphs">os</text></svg>
<svg style="left:2557px;top:585px" width="33" height="33" viewBox="0 0 33 33"><path d="M12 5.4H5a3 3 0 0 0-3 3V27a3 3 0 0 0 3 3h18.3a3 3 0 0 0 3-3V19.5" fill="none" stroke="#111" stroke-width="3.4" stroke-linecap="round"/><path d="M10.6 21.3L29.8 2M19 1.8H29.8V12.4" fill="none" stroke="#111" stroke-width="3.4" stroke-linecap="round" stroke-linejoin="round"/></svg>
<div class="a" style="left:470px;top:642px;width:2128px;height:85px;background:#fff;border-radius:14px;box-shadow:0 0 0 1px #dcdcdc,0 2px 3px rgba(0,0,0,0.12)"></div>
<svg style="left:496px;top:678px" width="13" height="15" viewBox="0 0 13 15"><path d="M12 0v15L0 7.5z" fill="#c8c8c8"/></svg>
<svg style="left:559px;top:670px" width="30" height="30" viewBox="0 0 30 30"><path d="M3 3v9h9" fill="none" stroke="#bdbdbd" stroke-width="2.4" stroke-linecap="round" stroke-linejoin="round"/><path d="M3.5 12A12 11.5 0 1 1 15 28h-1" fill="none" stroke="#bdbdbd" stroke-width="2.4" stroke-linecap="round"/></svg>
<svg style="left:623px;top:670px" width="30" height="30" viewBox="0 0 30 30"><path d="M27 3v9h-9" fill="none" stroke="#bdbdbd" stroke-width="2.4" stroke-linecap="round" stroke-linejoin="round"/><path d="M26.5 12A12 11.5 0 1 0 15 28h1" fill="none" stroke="#bdbdbd" stroke-width="2.4" stroke-linecap="round"/></svg>
<svg style="left:680px;top:660px" width="110" height="50" viewBox="0 0 110 50"><g transform="translate(25.8 22) rotate(45)" fill="none" stroke="#333" stroke-width="2.6" stroke-linejoin="round" stroke-linecap="round"><path d="M-9.5 0C-10 5-11 9-13.5 13C-6 15.5 2 15 8.5 14L9.5 0"/><path d="M-10 0H10V-4a1.5 1.5 0 0 0-1.5-1.5H-8.5A1.5 1.5 0 0 0-10-4Z"/><path d="M-3.2 -5.5V-11.5a3.2 3.2 0 0 1 6.4 0V-5.5"/></g><g fill="none" stroke="#333" stroke-width="2.6" stroke-linejoin="round" stroke-linecap="round"><path d="M80.5 37L73.8 30.2a3 3 0 0 1 0-4.2L86.5 13.2a3 3 0 0 1 4.2 0L97.6 20a3 3 0 0 1 0 4.2L85 37"/><path d="M79.5 24.5L88 33"/><path d="M80.5 37.3H98.5"/></g></svg>

<div class="a" style="left:802px;top:669px;width:2px;height:32px;background:#dde2ea"></div>
<div class="t" style="left:835px;top:674.5px;font-size:29px;color:#333;font-weight:400;">微软雅黑</div>
<svg style="left:960px;top:681px" width="15" height="9" viewBox="0 0 15 9"><path d="M1.5 1.5l6 6 6-6" fill="none" stroke="#777" stroke-width="2.4" stroke-linecap="round" stroke-linejoin="round"/></svg>
<div class="t" style="left:1011.5px;top:674.5px;font-size:29px;color:#333;font-weight:400;">小三</div>
<svg style="left:1086px;top:681px" width="15" height="9" viewBox="0 0 15 9"><path d="M1.5 1.5l6 6 6-6" fill="none" stroke="#777" stroke-width="2.4" stroke-linecap="round" stroke-linejoin="round"/></svg>
<svg style="left:1130px;top:669px" width="30" height="30" viewBox="0 0 30 30"><path d="M2 29L11 3h1L21 29M6 20h11" fill="none" stroke="#333" stroke-width="2.4" stroke-linecap="round" stroke-linejoin="round"/><path d="M23 1v10M18 6h10" stroke="#1a6ff0" stroke-width="2.6"/></svg>
<svg style="left:1194px;top:669px" width="30" height="30" viewBox="0 0 30 30"><path d="M2 29L11 3h1L21 29M6 20h11" fill="none" stroke="#333" stroke-width="2.4" stroke-linecap="round" stroke-linejoin="round"/><path d="M18 4h10" stroke="#1a6ff0" stroke-width="2.6"/></svg>
<div class="a" style="left:1244px;top:669px;width:2px;height:32px;background:#dde2ea"></div>
<div class="a" style="left:1254px;top:657px;width:55px;height:55px;border-radius:9px;background:#e6e6e6"></div>
<svg style="left:1269px;top:670px" width="25" height="30" viewBox="0 0 25 30"><path d="M2.5 2h10a6.5 6.5 0 0 1 0 13h-10zM2.5 15h12a6.8 6.8 0 0 1 0 13.5h-12z" fill="none" stroke="#333" stroke-width="2.6" stroke-linejoin="round"/></svg>
<svg style="left:1333px;top:670px" width="26" height="30" viewBox="0 0 26 30"><path d="M10 2h14M2 28h14M17 2L9 28" fill="none" stroke="#333" stroke-width="2.6" stroke-linecap="round"/></svg>
<svg style="left:1398px;top:670px" width="24" height="30" viewBox="0 0 24 30"><path d="M3 1.5v12a9 9 0 0 0 18 0v-12M1.5 28h21" fill="none" stroke="#333" stroke-width="2.6" stroke-linecap="round"/></svg>
<svg style="left:1459px;top:669px" width="30" height="31" viewBox="0 0 30 31"><path d="M9 10L15 2l6 8M8 21l-3 8M22 21l3 8M1.5 15h27" fill="none" stroke="#333" stroke-width="2.6" stroke-linecap="round"/></svg>
<svg style="left:1524px;top:669px" width="26" height="30" viewBox="0 0 26 30"><path d="M2 29L11 3h1L21 29M6 20h11" fill="none" stroke="#333" stroke-width="2.4" stroke-linecap="round" stroke-linejoin="round"/><path d="M24 2v1M23.5 7l-1.5 6" stroke="#1a6ff0" stroke-width="2.4" stroke-linecap="round"/></svg>
<svg style="left:1566px;top:681px" width="15" height="9" viewBox="0 0 15 9"><path d="M1.5 1.5l6 6 6-6" fill="none" stroke="#777" stroke-width="2.4" stroke-linecap="round" stroke-linejoin="round"/></svg>
<svg style="left:1623px;top:670px" width="27" height="32" viewBox="0 0 27 32"><path d="M5 17l12-13a3 3 0 0 1 4 0l3 3a3 3 0 0 1 0 4L11 23H6z" fill="none" stroke="#333" stroke-width="2.6" stroke-linejoin="round"/><path d="M6 18l-3 5h6" fill="#333" stroke="#333" stroke-width="1.5"/><rect x="1" y="25" width="24" height="6" rx="1.5" fill="#ffee00" stroke="#c8b400" stroke-width="0.8"/></svg>
<svg style="left:1671px;top:681px" width="15" height="9" viewBox="0 0 15 9"><path d="M1.5 1.5l6 6 6-6" fill="none" stroke="#777" stroke-width="2.4" stroke-linecap="round" stroke-linejoin="round"/></svg>
<svg style="left:1719px;top:670px" width="26" height="32" viewBox="0 0 26 32"><path d="M3 21L12 1h1L22 21M7 14h12" fill="none" stroke="#333" stroke-width="2.6" stroke-linecap="round" stroke-linejoin="round"/><rect x="1" y="25" width="24" height="6" rx="1.5" fill="#3d7ef0" stroke="#2a62d0" stroke-width="0.8"/></svg>
<svg style="left:1767px;top:681px" width="15" height="9" viewBox="0 0 15 9"><path d="M1.5 1.5l6 6 6-6" fill="none" stroke="#777" stroke-width="2.4" stroke-linecap="round" stroke-linejoin="round"/></svg>
<div class="a" style="left:1798px;top:669px;width:2px;height:32px;background:#dde2ea"></div>
<div class="t" style="left:1819px;top:674.5px;font-size:29px;letter-spacing:-0.5px;color:#333;font-weight:400;">标题1</div>
<svg style="left:1908px;top:681px" width="15" height="9" viewBox="0 0 15 9"><path d="M1.5 1.5l6 6 6-6" fill="none" stroke="#777" stroke-width="2.4" stroke-linecap="round" stroke-linejoin="round"/></svg>
<svg style="left:1957px;top:671px" width="30" height="28" viewBox="0 0 30 28"><path d="M1.5 2h26.0" stroke="#333" stroke-width="2.8" stroke-linecap="round"/><path d="M1.5 13.5h15.5" stroke="#333" stroke-width="2.8" stroke-linecap="round"/><path d="M1.5 25h26.0" stroke="#333" stroke-width="2.8" stroke-linecap="round"/></svg>
<div class="a" style="left:2008px;top:657px;width:56px;height:55px;border-radius:9px;background:#e6e6e6"></div>
<svg style="left:2021px;top:671px" width="30" height="28" viewBox="0 0 30 28"><path d="M1.5 2h26.0" stroke="#333" stroke-width="2.8" stroke-linecap="round"/><path d="M7 13.5h15" stroke="#333" stroke-width="2.8" stroke-linecap="round"/><path d="M1.5 25h26.0" stroke="#333" stroke-width="2.8" stroke-linecap="round"/></svg>
<svg style="left:2085px;top:671px" width="30" height="28" viewBox="0 0 30 28"><path d="M1.5 2h26.0" stroke="#333" stroke-width="2.8" stroke-linecap="round"/><path d="M13 13.5h14.5" stroke="#333" stroke-width="2.8" stroke-linecap="round"/><path d="M1.5 25h26.0" stroke="#333" stroke-width="2.8" stroke-linecap="round"/></svg>
<svg style="left:2149px;top:671px" width="30" height="28" viewBox="0 0 30 28"><path d="M1.5 2h26.0" stroke="#333" stroke-width="2.8" stroke-linecap="round"/><path d="M1.5 13.5h26.0" stroke="#333" stroke-width="2.8" stroke-linecap="round"/><path d="M1.5 25h26.0" stroke="#333" stroke-width="2.8" stroke-linecap="round"/></svg>
<svg style="left:2213px;top:670px" width="30" height="29" viewBox="0 0 30 29"><path d="M3 7h24M7 2L2 7l5 5M23 2l5 5-5 5" fill="none" stroke="#333" stroke-width="2.8" stroke-linecap="round" stroke-linejoin="round"/><path d="M1.5 17h27M1.5 26h27" stroke="#333" stroke-width="2.8" stroke-linecap="round"/></svg>
<svg style="left:2277px;top:670px" width="30" height="30" viewBox="0 0 30 30"><path d="M6 2v26M1.5 7L6 2l4.5 5M1.5 23L6 28l4.5-5" fill="none" stroke="#1a6ff0" stroke-width="2.8" stroke-linecap="round" stroke-linejoin="round"/><path d="M16 2h12M16 10h12M16 18h12M16 26h12" stroke="#333" stroke-width="2.8" stroke-linecap="round"/></svg>
<svg style="left:2321px;top:682px" width="15" height="9" viewBox="0 0 15 9"><path d="M1.5 1.5l6 6 6-6" fill="none" stroke="#777" stroke-width="2.4" stroke-linecap="round" stroke-linejoin="round"/></svg>
<svg style="left:2373px;top:671px" width="30" height="28" viewBox="0 0 30 28"><path d="M1.5 2h27M12 13.5h16.5M1.5 25h27" stroke="#333" stroke-width="2.8" stroke-linecap="round"/><path d="M7 9l-4 4.5L7 18" fill="none" stroke="#1a6ff0" stroke-width="2.6" stroke-linecap="round" stroke-linejoin="round"/></svg>
<svg style="left:2437px;top:671px" width="22" height="28" viewBox="0 0 22 28"><path d="M1.5 2h20M1.5 13.5h16M1.5 25h20" stroke="#333" stroke-width="2.8" stroke-linecap="round"/></svg>
<div class="a" style="left:2457px;top:663px;width:8px;height:44px;background:linear-gradient(90deg,rgba(255,255,255,0.6),#f2f2f2 60%,#fff)"></div>
<svg style="left:2487px;top:678px" width="13" height="15" viewBox="0 0 13 15"><path d="M0 0v15l13-7.5z" fill="#777"/></svg>
<div class="a" style="left:2524px;top:665px;width:2px;height:40px;background:#dcdcdc"></div>
<svg style="left:2548px;top:679px" width="20" height="11" viewBox="0 0 20 11"><path d="M2 9.5l8-8 8 8" fill="none" stroke="#666" stroke-width="2.6" stroke-linecap="round" stroke-linejoin="round"/></svg>
<div class="t" style="left:470px;top:796px;font-size:33px;color:#1f1f1f;font-weight:700;">大纲</div>
<svg style="left:850px;top:797px" width="24" height="24" viewBox="0 0 24 24"><path d="M1 1l22 22M23 1L1 23" stroke="#777" stroke-width="2.6"/></svg>
<div class="t" style="left:505px;top:876px;font-size:28.4px;color:#1b6ef3;font-weight:700;">短篇小说常见的结构形态</div>
<!-- page -->
<div class="a" style="left:455px;top:728px;width:2159px;height:905px;overflow:hidden">
<div class="a" style="left:494.5px;top:12px;width:1588.5px;height:1200px;background:#fff;box-shadow:0 0 3px rgba(0,0,0,0.14),0 0 16px rgba(0,0,0,0.1)"></div>
</div>
<div class="a" style="left:1188px;top:884px;width:2px;height:49px;background:#dedede"></div>
<div class="a" style="left:1141px;top:931px;width:49px;height:2px;background:#dedede"></div>
<div class="a" style="left:2296px;top:884px;width:2px;height:49px;background:#dedede"></div>
<div class="a" style="left:2296px;top:931px;width:48px;height:2px;background:#dedede"></div>
<svg style="left:1092px;top:956px" width="24" height="24" viewBox="0 0 24 24"><path d="M1 1H23V6H22.2C22 4.5 21.5 4 20 4H14V20.5C14 21.5 15 22 17 22.2V23H7V22.2C9 22 10 21.5 10 20.5V4H4C2.5 4 2 4.5 1.8 6H1Z" fill="#8f8f8f"/></svg>
<div class="t" style="left:1523px;top:950.2px;font-size:40px;letter-spacing:0.42px;color:#111;font-weight:700;">短篇小说常见的结构形态</div>
<div class="a" style="left:1964px;top:934px;width:2px;height:67px;background:#555"></div>
<div class="a" style="left:455px;top:728px;width:2159px;height:905px;overflow:hidden">
<div class="t" style="left:805px;top:326.9px;font-size:37px;letter-spacing:0.15px;color:#111;font-weight:400;">短篇小说是一种以小见大，以局部反映整体的语言艺术，它选材</div>
<div class="t" style="left:733.5px;top:388.9px;font-size:37px;letter-spacing:0.05px;color:#111;font-weight:400;">要严，开掘要深，虽然不一定要重大的社会题材，但必须反映重大的</div>
<div class="t" style="left:733.5px;top:450.9px;font-size:37px;letter-spacing:-0.93px;color:#111;font-weight:400;">社会意义。同时，它在结构安排上，也应见出匠心，一丝不苟。</div>
<div class="t" style="left:805px;top:512.9px;font-size:37px;letter-spacing:0.15px;color:#111;font-weight:400;">安排短篇小说的结构，总的说来，头绪不能过繁，过程不能拉得</div>
<div class="t" style="left:733.5px;top:574.9px;font-size:37px;letter-spacing:0.05px;color:#111;font-weight:400;">太长，人物不能过多，铺述不宜过详，表达不宜和盘托出，高潮不能</div>
<div class="t" style="left:733.5px;top:636.9px;font-size:37px;letter-spacing:0.05px;color:#111;font-weight:400;">一个接一个。它应该凝练集中，以少显多。否则，极易写成压缩的中</div>
<div class="t" style="left:733.5px;top:698.9px;font-size:37px;letter-spacing:-1.15px;color:#111;font-weight:400;">篇。</div>
<div class="t" style="left:805px;top:760.9px;font-size:37px;letter-spacing:-1.15px;color:#111;font-weight:400;">短篇小说常见的结构形态有下面几种：</div>
<div class="t" style="left:805px;top:822.9px;font-size:37px;letter-spacing:-1.15px;color:#111;font-weight:400;">(一)情节结构</div>
<div class="t" style="left:805px;top:884.9px;font-size:37px;letter-spacing:0.15px;color:#111;font-weight:400;">情节结构以事件的发生发展为结构线，小说的展开完全依据事件</div>
</div>
<div class="a" style="left:2594px;top:763px;width:12px;height:64px;border-radius:6px;background:#bec5cf"></div>
<div class="a" style="left:2501px;top:948px;width:70px;height:70px;border:2px solid #e2e2e2;border-radius:17px;background:#fff;box-shadow:0 0 12px rgba(0,0,0,0.05)"></div>
<svg style="left:2524px;top:973px" width="29" height="30" viewBox="0 0 29 30"><path d="M4 1.5h21a2.5 2.5 0 0 1 2.5 2.5v17a2.5 2.5 0 0 1-2.5 2.5H14l-5 5v-5H4a2.5 2.5 0 0 1-2.5-2.5V4A2.5 2.5 0 0 1 4 1.5z" fill="none" stroke="#666" stroke-width="2.6" stroke-linejoin="round"/><path d="M14.5 7v11M9 12.5h11" stroke="#666" stroke-width="2.6" stroke-linecap="round"/></svg>
<div class="a" style="left:462px;top:1641px;width:1746px;height:12px;border-radius:6px;background:#bec5cf"></div>
<div class="a" style="left:470px;top:1666px;width:56px;height:56px;border-radius:14px;background:#d9d9d9"></div>
<svg style="left:483px;top:1681px" width="30" height="26" viewBox="0 0 30 26"><path d="M3 2.5h1.5M10 2.5h17.5M3 12.8h1.5M10 12.8h17.5M3 23.3h1.5M10 23.3h17.5" stroke="#555" stroke-width="3" stroke-linecap="round"/></svg>
<svg style="left:557px;top:1679px" width="26" height="31" viewBox="0 0 26 31"><path d="M2.5 1.5v27M23.5 1.5v27M2.5 15h21" stroke="#555" stroke-width="3" stroke-linecap="round"/><path d="M9 3.5h8l-4 5z" fill="#333" stroke="#333" stroke-width="1.2" stroke-linejoin="round"/><path d="M9 26.5h8l-4-5z" fill="#333" stroke="#333" stroke-width="1.2" stroke-linejoin="round"/></svg>
<div class="a" style="left:614px;top:1674px;width:2px;height:40px;background:#d4d4d4"></div>
<div class="a" style="left:906px;top:1674px;width:2px;height:40px;background:#d4d4d4"></div>
<div class="a" style="left:1131px;top:1674px;width:2px;height:40px;background:#d4d4d4"></div>
<div class="a" style="left:2148px;top:1674px;width:2px;height:40px;background:#d4d4d4"></div>
<div class="t" style="left:649px;top:1683.8px;font-size:27px;color:#555;font-weight:400;">页面 : 1/5</div>
<div class="t" style="left:799px;top:1683.8px;font-size:27px;color:#555;font-weight:400;">节 : 1/1</div>
<div class="t" style="left:939px;top:1683.8px;font-size:27px;color:#555;font-weight:400;">行 : 1</div>
<div class="t" style="left:1035px;top:1683.8px;font-size:27px;color:#555;font-weight:400;">列 : 12</div>
<div class="t" style="left:1165px;top:1683.8px;font-size:27px;color:#555;font-weight:400;">字数 : 3277</div>
<svg style="left:2080px;top:1681px" width="33" height="33" viewBox="0 0 33 33"><circle cx="15" cy="15" r="13" fill="none" stroke="#777" stroke-width="2.6"/><path d="M2 15h26M15 2c-6 6-6 20 0 26M15 2c6 6 6 20 0 26" fill="none" stroke="#777" stroke-width="2.4"/><circle cx="24" cy="25" r="7" fill="#ededed"/><path d="M20 25l3 3 5-6" fill="none" stroke="#2aa02a" stroke-width="2.6" stroke-linecap="round"/></svg>
<div class="a" style="left:2184px;top:1694px;width:28px;height:2.6px;background:#777"></div>
<div class="t" style="left:2265px;top:1683.8px;font-size:27px;color:#666;font-weight:400;">100%</div>
<svg style="left:2384px;top:1682px" width="28" height="28" viewBox="0 0 28 28"><path d="M14 1v26M1 14h26" stroke="#777" stroke-width="2.6"/></svg>
<svg style="left:2456px;top:1681px" width="28" height="28" viewBox="0 0 28 28"><path d="M2 9V5a3 3 0 0 1 3-3h4M19 2h4a3 3 0 0 1 3 3v4M26 19v4a3 3 0 0 1-3 3h-4M9 26H5a3 3 0 0 1-3-3v-4" fill="none" stroke="#777" stroke-width="2.8" stroke-linecap="round"/><rect x="9.5" y="9.5" width="9" height="9" rx="2" fill="none" stroke="#777" stroke-width="2.8"/></svg>
<svg style="left:2532px;top:1680px" width="28" height="28" viewBox="0 0 28 28"><path d="M2 9V5a3 3 0 0 1 3-3h4M19 2h4a3 3 0 0 1 3 3v4M26 19v4a3 3 0 0 1-3 3h-4M9 26H5a3 3 0 0 1-3-3v-4M4 4l6.5 6.5M24 24l-6.5-6.5" fill="none" stroke="#777" stroke-width="2.8" stroke-linecap="round"/></svg>
</div>
</body></html>
